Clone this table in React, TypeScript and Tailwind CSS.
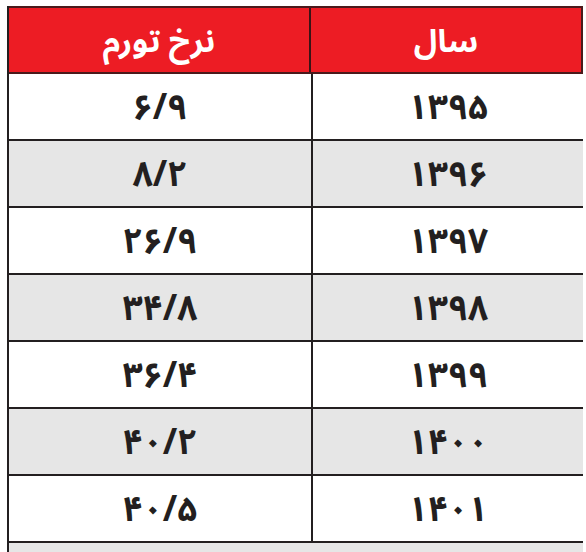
const rows = [
  { year: '۱۳۹۵', rate: '۶/۹' },
  { year: '۱۳۹۶', rate: '۸/۲' },
  { year: '۱۳۹۷', rate: '۲۶/۹' },
  { year: '۱۳۹۸', rate: '۳۴/۸' },
  { year: '۱۳۹۹', rate: '۳۶/۴' },
  { year: '۱۴۰۰', rate: '۴۰/۲' },
  { year: '۱۴۰۱', rate: '۴۰/۵' },
];

const font = { fontFamily: '"Noto Sans Arabic", "DejaVu Sans", sans-serif' };

export default function App() {
  return (
    <div className="w-[586px] h-[552px] bg-white overflow-hidden pt-[6px] pl-[7px]" style={font}>
      <div dir="rtl" className="w-[576px] border-l-2 border-[#231f20]">
        <div className="flex h-[68px] bg-[#ed1c24] border-y-2 border-[#4a1a1c] border-r-2 text-white text-[32px] font-bold">
          <div className="w-[272px] flex items-center justify-center border-l-2 border-[#3a1416] pt-[4px]">سال</div>
          <div className="flex-1 flex items-center justify-center pt-[4px]">نرخ تورم</div>
        </div>
        {rows.map((r, i) => (
          <div
            key={r.year}
            className={`flex h-[67px] border-b-2 border-[#231f20] text-[#231f20] text-[35px] font-bold ${i % 2 ? 'bg-[#e6e6e6]' : 'bg-white'}`}
          >
            <div className="w-[272px] flex items-center justify-center border-l-2 border-[#231f20] pt-[4px]">{r.year}</div>
            <div className="flex-1 flex items-center justify-center pt-[4px]">{r.rate}</div>
          </div>
        ))}
        <div className="h-[20px] bg-[#e6e6e6]" />
      </div>
    </div>
  );
}
